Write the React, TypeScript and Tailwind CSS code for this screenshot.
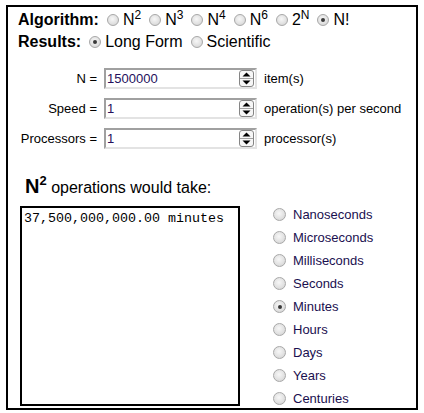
import { ReactNode } from 'react';

const ALGORITHMS: { base: string; exp: string; checked?: boolean }[] = [
  { base: 'N', exp: '2' },
  { base: 'N', exp: '3' },
  { base: 'N', exp: '4' },
  { base: 'N', exp: '6' },
  { base: '2', exp: 'N' },
  { base: 'N!', exp: '', checked: true },
];

const UNITS = [
  'Nanoseconds',
  'Microseconds',
  'Milliseconds',
  'Seconds',
  'Minutes',
  'Hours',
  'Days',
  'Years',
  'Centuries',
];

function Radio({ checked, big }: { checked?: boolean; big?: boolean }) {
  return (
    <span
      className={
        (big ? 'w-[13px] h-[13px] ' : 'w-[12px] h-[12px] ') +
        'shrink-0 rounded-full border border-[#a8a8a8] bg-[radial-gradient(circle_at_45%_40%,#f7f7f7_0%,#e2e2e2_55%,#cdcdcd_100%)] flex items-center justify-center'
      }
    >
      {checked && <span className="w-[4px] h-[4px] rounded-full bg-[#3a3a3a]" />}
    </span>
  );
}

function Spinner() {
  return (
    <svg width="15" height="17" viewBox="0 0 15 17" className="shrink-0">
      <rect x="0.5" y="0.5" width="14" height="16" rx="2.5" fill="#f6f6f6" stroke="#858585" />
      <line x1="1" y1="8.5" x2="14" y2="8.5" stroke="#a0a0a0" />
      <path d="M3.5 6.5 L7.5 2.5 L11.5 6.5 Z" fill="#000" />
      <path d="M3.5 10.5 L11.5 10.5 L7.5 14.5 Z" fill="#000" />
    </svg>
  );
}

function Field({ label, value, unit }: { label: string; value: string; unit: string }) {
  return (
    <div className="flex items-center h-[21px]">
      <span className="w-[89px] text-right">{label}</span>
      <div className="ml-[7px] w-[153px] h-[21px] flex items-center justify-between border-2 border-t-[#a0a0a0] border-l-[#a0a0a0] border-b-[#e3e3e3] border-r-[#e3e3e3] bg-white pl-[1px] pr-[1px]">
        <span className="text-[#24105c]">{value}</span>
        <Spinner />
      </div>
      <span className="ml-[7px]">{unit}</span>
    </div>
  );
}

function Option({ children, checked }: { children: ReactNode; checked?: boolean }) {
  return (
    <span className="ml-[8px] flex items-center">
      <Radio checked={checked} />
      <span className="ml-[4px]">{children}</span>
    </span>
  );
}

export default function App() {
  return (
    <div className="w-[424px] h-[413px] bg-white text-black font-['Liberation_Sans',Arial,sans-serif] pt-[5px] pl-[6px]">
      <div className="w-[412px] h-[405px] border-2 border-black flex flex-col">
        <div className="mt-[2px] pl-[10px] h-[22px] flex items-center text-[16px]">
          <b className="font-bold">Algorithm:</b>
          {ALGORITHMS.map((a, i) => (
            <Option key={i} checked={a.checked}>
              {a.base}
              {a.exp && <sup className="text-[12px]">{a.exp}</sup>}
            </Option>
          ))}
        </div>
        <div className="pl-[10px] h-[21px] flex items-center text-[16px]">
          <b className="font-bold">Results:</b>
          <Option checked>Long Form</Option>
          <Option>Scientific</Option>
        </div>

        <div className="mt-[16px] flex flex-col gap-[9px] text-[13px]">
          <Field label="N =" value="1500000" unit="item(s)" />
          <Field label="Speed =" value="1" unit="operation(s) per second" />
          <Field label="Processors =" value="1" unit="processor(s)" />
        </div>

        <div className="mt-[14px] ml-[9px] h-px bg-[#8a8a8a]" />

        <h3 className="mt-[11px] pl-[17px] h-[24px] leading-[24px] text-[16px]">
          <span className="text-[20px] font-bold">
            N<sup className="text-[13px] -top-[0.6em]">2</sup>
          </span>{' '}
          operations would take:
        </h3>

        <div className="mt-[5px] flex items-start">
          <div className="mt-[3px] ml-[12px] w-[220px] h-[200px] border-2 border-black px-[2px] pt-[3px] font-['Liberation_Mono','Courier_New',monospace] text-[13.33px] leading-[16px]">
            37,500,000,000.00 minutes
          </div>
          <div className="ml-[33px] flex flex-col text-[13px] text-[#1a0f4f]">
            {UNITS.map((u) => (
              <div key={u} className="h-[23px] flex items-center">
                <Radio big checked={u === 'Minutes'} />
                <span className="ml-[7px]">{u}</span>
              </div>
            ))}
          </div>
        </div>
      </div>
    </div>
  );
}
